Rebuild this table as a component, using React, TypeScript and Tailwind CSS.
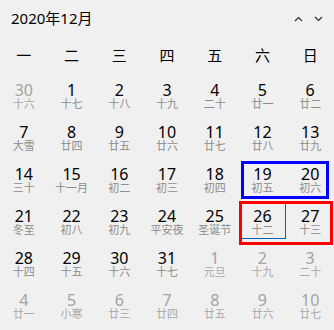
import type { CSSProperties } from "react";

type Day = { d: number; lunar: string; other?: boolean; today?: boolean };

const WEEKDAYS = ["一", "二", "三", "四", "五", "六", "日"];

const WEEKS: Day[][] = [
  [
    { d: 30, lunar: "十六", other: true },
    { d: 1, lunar: "十七" },
    { d: 2, lunar: "十八" },
    { d: 3, lunar: "十九" },
    { d: 4, lunar: "二十" },
    { d: 5, lunar: "廿一" },
    { d: 6, lunar: "廿二" },
  ],
  [
    { d: 7, lunar: "大雪" },
    { d: 8, lunar: "廿四" },
    { d: 9, lunar: "廿五" },
    { d: 10, lunar: "廿六" },
    { d: 11, lunar: "廿七" },
    { d: 12, lunar: "廿八" },
    { d: 13, lunar: "廿九" },
  ],
  [
    { d: 14, lunar: "三十" },
    { d: 15, lunar: "十一月" },
    { d: 16, lunar: "初二" },
    { d: 17, lunar: "初三" },
    { d: 18, lunar: "初四" },
    { d: 19, lunar: "初五" },
    { d: 20, lunar: "初六" },
  ],
  [
    { d: 21, lunar: "冬至" },
    { d: 22, lunar: "初八" },
    { d: 23, lunar: "初九" },
    { d: 24, lunar: "平安夜" },
    { d: 25, lunar: "圣诞节" },
    { d: 26, lunar: "十二", today: true },
    { d: 27, lunar: "十三" },
  ],
  [
    { d: 28, lunar: "十四" },
    { d: 29, lunar: "十五" },
    { d: 30, lunar: "十六" },
    { d: 31, lunar: "十七" },
    { d: 1, lunar: "元旦", other: true },
    { d: 2, lunar: "十九", other: true },
    { d: 3, lunar: "二十", other: true },
  ],
  [
    { d: 4, lunar: "廿一", other: true },
    { d: 5, lunar: "小寒", other: true },
    { d: 6, lunar: "廿三", other: true },
    { d: 7, lunar: "廿四", other: true },
    { d: 8, lunar: "廿五", other: true },
    { d: 9, lunar: "廿六", other: true },
    { d: 10, lunar: "廿七", other: true },
  ],
];

const font: CSSProperties = {
  fontFamily: '"Noto Sans", "Noto Sans CJK SC", sans-serif',
};

function DayCell({ day }: { day: Day }) {
  return (
    <div className="relative flex h-[42px] flex-col items-center justify-center">
      {day.today && (
        <div className="absolute left-0 right-0 top-0 h-[38px] border border-[#0063b1]" />
      )}
      <span
        className={`text-[16px] leading-[16px] ${day.other ? "text-[#a3a3a3]" : "text-black"}`}
      >
        {day.d}
      </span>
      <span
        className={`text-[11px] leading-[12px] ${day.other ? "text-[#a8a8a8]" : "text-[#8c8c8c]"}`}
      >
        {day.lunar}
      </span>
    </div>
  );
}

export default function App() {
  return (
    <div className="relative h-[330px] w-[334px] overflow-hidden bg-[#f0f0f0]" style={font}>
      {/* Header */}
      <div className="flex h-[36px] items-center justify-between pl-[11px] pr-[11px]">
        <span className="text-[15px] leading-none text-black">2020年12月</span>
        <div className="flex items-center gap-[11px] pt-[1px]">
          <svg width="9" height="6" viewBox="0 0 9 6">
            <polyline points="1,5 4.5,1.5 8,5" fill="none" stroke="#2b2b40" strokeWidth="1.2" />
          </svg>
          <svg width="9" height="6" viewBox="0 0 9 6">
            <polyline points="1,1 4.5,4.5 8,1" fill="none" stroke="#2b2b40" strokeWidth="1.2" />
          </svg>
        </div>
      </div>

      {/* Weekdays */}
      <div className="grid h-[39px] grid-cols-7 items-center">
        {WEEKDAYS.map((w) => (
          <span key={w} className="text-center text-[15px] leading-none text-black">
            {w}
          </span>
        ))}
      </div>

      {/* Dates */}
      <div className="grid grid-cols-7">
        {WEEKS.flat().map((day, i) => (
          <DayCell key={i} day={day} />
        ))}
      </div>

      {/* Highlight frames */}
      <div className="absolute left-[241px] top-[161px] h-[38px] w-[88px] border-[3px] border-[#0000ff]" />
      <div className="absolute left-[239px] top-[201px] h-[44px] w-[94px] border-[3px] border-[#ff0000]" />
    </div>
  );
}
